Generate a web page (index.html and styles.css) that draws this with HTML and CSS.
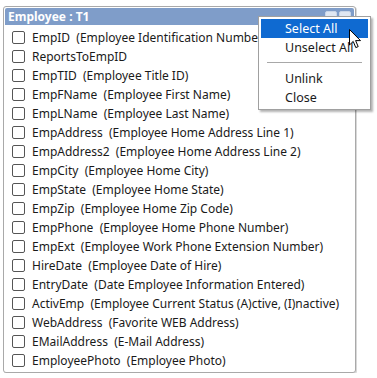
FILE: index.html
```html
<!DOCTYPE html>
<html lang="en">
<head>
    <meta charset="UTF-8">
    <title>Employee : T1</title>
    <link rel="stylesheet" href="styles.css">
</head>
<body>
    <section class="table-window">
        <div class="title-bar">
            <span class="title">Employee : T1</span>
            <span class="title-buttons"><i></i><i></i></span>
        </div>
        <ul class="field-list">
            <li><span class="box"></span><span class="label">EmpID  (Employee Identification Number)</span></li>
            <li><span class="box"></span><span class="label">ReportsToEmpID</span></li>
            <li><span class="box"></span><span class="label">EmpTID  (Employee Title ID)</span></li>
            <li><span class="box"></span><span class="label">EmpFName  (Employee First Name)</span></li>
            <li><span class="box"></span><span class="label">EmpLName  (Employee Last Name)</span></li>
            <li><span class="box"></span><span class="label">EmpAddress  (Employee Home Address Line 1)</span></li>
            <li><span class="box"></span><span class="label">EmpAddress2  (Employee Home Address Line 2)</span></li>
            <li><span class="box"></span><span class="label">EmpCity  (Employee Home City)</span></li>
            <li><span class="box"></span><span class="label">EmpState  (Employee Home State)</span></li>
            <li><span class="box"></span><span class="label">EmpZip  (Employee Home Zip Code)</span></li>
            <li><span class="box"></span><span class="label">EmpPhone  (Employee Home Phone Number)</span></li>
            <li><span class="box"></span><span class="label">EmpExt  (Employee Work Phone Extension Number)</span></li>
            <li><span class="box"></span><span class="label">HireDate  (Employee Date of Hire)</span></li>
            <li><span class="box"></span><span class="label">EntryDate  (Date Employee Information Entered)</span></li>
            <li><span class="box"></span><span class="label">ActivEmp  (Employee Current Status (A)ctive, (I)nactive)</span></li>
            <li><span class="box"></span><span class="label">WebAddress  (Favorite WEB Address)</span></li>
            <li><span class="box"></span><span class="label">EMailAddress  (E-Mail Address)</span></li>
            <li><span class="box"></span><span class="label">EmployeePhoto  (Employee Photo)</span></li>
        </ul>
    </section>

    <div class="context-menu">
        <div class="menu-item active">Select All</div>
        <div class="menu-item">Unselect All</div>
        <div class="menu-sep"></div>
        <div class="menu-item">Unlink</div>
        <div class="menu-item">Close</div>
    </div>

    <svg class="cursor" width="13" height="20" viewBox="0 0 13 20">
        <path d="M0.5 0.5 L0.5 16 L4.2 12.4 L6.8 18.6 L9.2 17.6 L6.6 11.6 L11.5 11.6 Z" fill="#fff" stroke="#000" stroke-width="1"/>
    </svg>
</body>
</html>
```

FILE: styles.css
```css
body {
    margin: 0;
    background: #fff;
    font-family: "Noto Sans", "Open Sans", sans-serif;
    font-size: 12px;
    color: #1a1a1a;
}
.table-window {
    margin: 6px 0 0 3px;
    width: 351px;
    height: 365px;
    border: 1px solid #a9a9a9;
    border-radius: 3px;
    box-shadow: 1px 1px 0 #d8d8d8;
    background: #fff;
}
.title-bar {
    display: flex;
    align-items: center;
    justify-content: space-between;
    height: 17px;
    margin: 1px 1px 0 1px;
    padding: 0 3px 0 3px;
    background: #7f9dc9;
    border-radius: 2px 2px 0 0;
}
.title {
    color: #fff;
    font-weight: bold;
    font-size: 12px;
}
.title-buttons {
    display: flex;
    gap: 2px;
}
.title-buttons i {
    width: 10px;
    height: 9px;
    border: 1px solid #c9d6e8;
    border-radius: 2px;
    background: #dfe7f2;
}
.field-list {
    list-style: none;
    margin: 0;
    padding: 3px 0 0 8px;
}
.field-list li {
    display: flex;
    align-items: center;
    height: 19px;
}
.box {
    width: 11px;
    height: 11px;
    border: 1px solid #555;
    border-radius: 2px;
    background: #fff;
    margin-right: 7px;
}
.label {
    white-space: pre;
}
.context-menu {
    position: absolute;
    left: 258px;
    top: 16px;
    width: 107px;
    padding: 2px;
    background: #fff;
    border: 1px solid #a0a0a0;
    box-shadow: 2px 2px 2px rgba(0, 0, 0, 0.3);
}
.menu-item {
    height: 19px;
    line-height: 19px;
    padding-left: 24px;
    font-size: 12.5px;
    color: #1a1a1a;
}
.menu-item.active {
    background: #0f6ad1;
    color: #fff;
}
.menu-sep {
    height: 1px;
    margin: 5px 6px 6px 6px;
    background: #a8a8a8;
}
.cursor {
    position: absolute;
    left: 349px;
    top: 29px;
}
```
